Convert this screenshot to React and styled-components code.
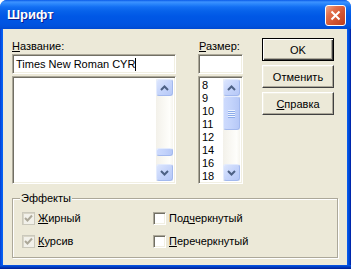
import React from 'react';
import styled, { createGlobalStyle } from 'styled-components';

const Global = createGlobalStyle`
  html, body { margin: 0; padding: 0; background: #ffffff; }
  body { font-family: "Liberation Sans", Arial, sans-serif; font-size: 11px; color: #000; }
  * { box-sizing: border-box; }
`;

const Win = styled.div`
  width: 351px;
  height: 269px;
  display: flex;
  flex-direction: column;
  overflow: hidden;
  border-radius: 7px 7px 0 0;
  background: #0055e5;
`;

const TitleBar = styled.div`
  height: 29px;
  flex: none;
  display: flex;
  align-items: center;
  padding: 0 5px 0 7px;
  background: linear-gradient(
    to bottom,
    #0a5ae8 0px,
    #3d93ff 2px,
    #2a86fb 4px,
    #136ff3 7px,
    #0762ea 11px,
    #0058e6 16px,
    #0055e3 22px,
    #0052dd 26px,
    #0049d2 29px
  );
`;

const Title = styled.div`
  flex: 1;
  color: #fff;
  font-family: "Liberation Sans", Arial, sans-serif;
  font-weight: bold;
  font-size: 13px;
  text-shadow: 1px 1px 0 #0a1d8f;
  padding-bottom: 1px;
`;

const CloseBtn = styled.div`
  width: 21px;
  height: 21px;
  margin-top: 1px;
  border: 1px solid #fff;
  border-radius: 3px;
  background: linear-gradient(135deg, #eea98f 0%, #e2704c 30%, #d25532 60%, #bc3e1d 100%);
  display: flex;
  align-items: center;
  justify-content: center;
`;

const Middle = styled.div`
  flex: 1;
  display: flex;
  min-height: 0;
`;

const LeftEdge = styled.div`
  width: 3px;
  flex: none;
  background: linear-gradient(to right, #0a3ad0, #0058ea, #0a62f7);
`;

const RightEdge = styled.div`
  width: 4px;
  flex: none;
  background: linear-gradient(to right, #0a5ef2, #0050e0, #0040c8, #001a9c);
`;

const BottomEdge = styled.div`
  height: 4px;
  flex: none;
  background: linear-gradient(to bottom, #0a58e8, #0046cd, #0032b0, #001a90);
`;

const Client = styled.div`
  flex: 1;
  background: #ece9d8;
  padding: 9px 9px 0 9px;
  display: flex;
  flex-direction: column;
`;

const TopRow = styled.div`
  display: flex;
  align-items: flex-start;
`;

const Column = styled.div`
  width: ${p => p.$w}px;
  margin-left: ${p => p.$ml || 0}px;
  display: flex;
  flex-direction: column;
  flex: none;
`;

const Label = styled.div`
  line-height: 14px;
  height: 14px;
  margin-top: 1px;
  white-space: nowrap;
  padding-left: ${p => p.$pl || 0}px;
`;

const U = styled.span`
  text-decoration: underline;
`;

const Sunken = styled.div`
  background: #fff;
  border: 1px solid;
  border-color: #aca899 #fff #fff #aca899;
  box-shadow: inset 1px 1px 0 #716f64, inset -1px -1px 0 #f1efe2;
`;

const Field = styled(Sunken)`
  height: 20px;
  margin-top: 1px;
  padding: 0 3px;
  display: flex;
  align-items: center;
  white-space: nowrap;
  line-height: 13px;
`;

const Caret = styled.span`
  display: inline-block;
  width: 1px;
  height: 13px;
  background: #000;
  margin-left: 0px;
`;

const ListBox = styled(Sunken)`
  height: 108px;
  margin-top: 2px;
  padding: 2px;
  display: flex;
`;

const ListItems = styled.div`
  flex: 1;
  overflow: hidden;
  padding-left: 1px;
  line-height: 13px;
`;

const ScrollBar = styled.div`
  width: 17px;
  flex: none;
  display: flex;
  flex-direction: column;
  background: linear-gradient(to right, #f3f1ea, #fefefb 80%, #f6f5ef);
`;

const ScrollBtn = styled.div`
  width: 17px;
  height: 17px;
  flex: none;
  border: 1px solid;
  border-color: #e3ebfd #a3b9ee #a3b9ee #e3ebfd;
  border-radius: 3px;
  background: linear-gradient(135deg, #dde6fd 0%, #c6d5fb 50%, #b6c8f7 100%);
  display: flex;
  align-items: center;
  justify-content: center;
`;

const Track = styled.div`
  flex: 1;
  display: flex;
  flex-direction: column;
`;

const Thumb = styled.div`
  height: ${p => p.$h}px;
  margin-top: ${p => (p.$atEnd ? 'auto' : '0')};
  margin-bottom: ${p => p.$mb || 0}px;
  border: 1px solid;
  border-color: #e3ebfd #a3b9ee #a3b9ee #e3ebfd;
  border-radius: 3px;
  background: linear-gradient(to right, #cddafd 0%, #c3d3fb 50%, #b6c8f7 100%);
  display: flex;
  flex-direction: column;
  align-items: center;
  justify-content: center;
  gap: 1px;
`;

const Grip = styled.div`
  width: 7px;
  height: 1px;
  background: #eef4fe;
  box-shadow: 0 1px 0 #8cabea;
`;

const ButtonCol = styled.div`
  width: 72px;
  margin-left: 19px;
  display: flex;
  flex-direction: column;
  gap: 4px;
  flex: none;
`;

const Button = styled.div`
  height: 23px;
  display: flex;
  align-items: center;
  justify-content: center;
  background: #ece9d8;
  border: 1px solid;
  border-color: ${p => (p.$default ? '#000' : '#fff #404040 #404040 #fff')};
  box-shadow: ${p =>
    p.$default
      ? 'inset 1px 1px 0 #fff, inset -1px -1px 0 #404040, inset -2px -2px 0 #aca899'
      : 'inset -1px -1px 0 #aca899, inset 1px 1px 0 #f1efe2'};
`;

const Group = styled.div`
  position: relative;
  margin-top: 14px;
  height: 60px;
  border: 1px solid #aca899;
  box-shadow: 1px 1px 0 #fff, inset 1px 1px 0 #fff;
  padding: 13px 9px 9px 9px;
  display: grid;
  grid-template-columns: 131px 1fr;
  row-gap: 10px;
  align-content: start;
`;

const Legend = styled.div`
  position: absolute;
  top: -7px;
  left: 7px;
  padding: 0 1px;
  background: #ece9d8;
  line-height: 13px;
`;

const CheckRow = styled.div`
  display: flex;
  align-items: center;
  gap: 3px;
  height: 13px;
  line-height: 13px;
  white-space: nowrap;
`;

const Box = styled.div`
  width: 13px;
  height: 13px;
  flex: none;
  border: 1px solid;
  border-color: ${p => (p.$disabled ? '#cac8bb' : '#aca899 #fff #fff #aca899')};
  box-shadow: ${p =>
    p.$disabled
      ? 'inset 1px 1px 0 #d9d6c8'
      : 'inset 1px 1px 0 #716f64, inset -1px -1px 0 #f1efe2'};
  background: ${p => (p.$disabled ? '#f2f1ea' : '#fff')};
  display: flex;
  align-items: center;
  justify-content: center;
`;

const Up = () => (
  <svg width="9" height="6" viewBox="0 0 9 6">
    <polyline points="1,5 4.5,1.5 8,5" fill="none" stroke="#4d6185" strokeWidth="2" />
  </svg>
);

const Down = () => (
  <svg width="9" height="6" viewBox="0 0 9 6">
    <polyline points="1,1 4.5,4.5 8,1" fill="none" stroke="#4d6185" strokeWidth="2" />
  </svg>
);

const Check = () => (
  <svg width="9" height="9" viewBox="0 0 9 9">
    <polyline points="1,4 3.5,6.5 8,1.5" fill="none" stroke="#aca899" strokeWidth="2" />
  </svg>
);

function Scroll({ children }) {
  return (
    <ScrollBar>
      <ScrollBtn><Up /></ScrollBtn>
      <Track>{children}</Track>
      <ScrollBtn><Down /></ScrollBtn>
    </ScrollBar>
  );
}

const sizes = ['8', '9', '10', '11', '12', '14', '16', '18'];

function CheckItem({ checked, disabled, children }) {
  return (
    <CheckRow>
      <Box $disabled={disabled}>{checked && <Check />}</Box>
      <span>{children}</span>
    </CheckRow>
  );
}

export default function App() {
  return (
    <>
      <Global />
      <Win>
        <TitleBar>
          <Title>Шрифт</Title>
          <CloseBtn>
            <svg width="11" height="11" viewBox="0 0 11 11">
              <path d="M1.5 1.5 L9.5 9.5 M9.5 1.5 L1.5 9.5" stroke="#fff" strokeWidth="2" />
            </svg>
          </CloseBtn>
        </TitleBar>
        <Middle>
          <LeftEdge />
          <Client>
            <TopRow>
              <Column $w={164}>
                <Label><U>Н</U>азвание:</Label>
                <Field>Times New Roman CYR<Caret /></Field>
                <ListBox>
                  <ListItems />
                  <Scroll>
                    <Thumb $h={8} $atEnd $mb={8} />
                  </Scroll>
                </ListBox>
              </Column>
              <Column $w={45} $ml={22}>
                <Label $pl={1}><U>Р</U>азмер:</Label>
                <Field />
                <ListBox>
                  <ListItems>
                    {sizes.map(s => <div key={s}>{s}</div>)}
                  </ListItems>
                  <Scroll>
                    <Thumb $h={34}>
                      <Grip /><Grip /><Grip /><Grip />
                    </Thumb>
                  </Scroll>
                </ListBox>
              </Column>
              <ButtonCol>
                <Button $default>OK</Button>
                <Button>Отменить</Button>
                <Button><span><U>С</U>правка</span></Button>
              </ButtonCol>
            </TopRow>
            <Group>
              <Legend>Эффекты</Legend>
              <CheckItem checked disabled><U>Ж</U>ирный</CheckItem>
              <CheckItem>Под<U>ч</U>еркнутый</CheckItem>
              <CheckItem checked disabled><U>К</U>урсив</CheckItem>
              <CheckItem><U>П</U>еречеркнутый</CheckItem>
            </Group>
          </Client>
          <RightEdge />
        </Middle>
        <BottomEdge />
      </Win>
    </>
  );
}
